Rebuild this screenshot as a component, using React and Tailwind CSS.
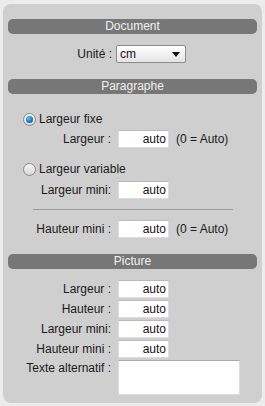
import React from "react";

const font = { fontFamily: '"Liberation Sans", Arial, sans-serif' };

function Header({ children }) {
  return (
    <div className="mx-[5px] h-[15px] rounded-[5px] bg-[#777777] text-[#f0f0f0] text-[12px] leading-[15px] text-center">
      {children}
    </div>
  );
}

function Input() {
  return (
    <div className="w-[51px] h-[18px] bg-white border border-[#dcdcdc] border-t-[#b8b8b8] text-right pr-[2px] text-[12px] leading-[16px] text-[#1a1010]">
      auto
    </div>
  );
}

function Row({ label, note }) {
  return (
    <div className="flex items-center h-[18px]">
      <div className="w-[109px] text-right pr-[1px] text-[12px] text-[#1a1a1a] shrink-0">{label}</div>
      <div className="ml-[6px]">
        <Input />
      </div>
      {note && <div className="ml-[7px] text-[12px] text-[#1a1a1a]">{note}</div>}
    </div>
  );
}

function Radio({ checked }) {
  return (
    <div className="w-[13px] h-[13px] rounded-full border border-[#8a8a8a] bg-gradient-to-b from-[#f4f4f4] to-[#d8d8d8] flex items-center justify-center">
      {checked && (
        <div className="w-[7px] h-[7px] rounded-full bg-[radial-gradient(circle_at_40%_35%,#6ec3f0,#1a6fb0_60%,#0d4a80)]" />
      )}
    </div>
  );
}

export default function App() {
  return (
    <div className="w-[265px] h-[406px] bg-[#ececec] pt-[4px] pl-[3px]" style={font}>
      <div className="w-[259px] h-[399px] bg-[#cfcfcf] rounded-[8px] pt-[15px] flex flex-col">
        <Header>Document</Header>

        <div className="mt-[11px] flex items-center h-[18px]">
          <div className="w-[109px] text-right text-[12px] text-[#1a1a1a]">Unité :</div>
          <div className="ml-[4px] w-[70px] h-[18px] border border-[#8a8a8a] rounded-[2px] bg-gradient-to-b from-white to-[#e4e4e4] flex items-center justify-between pl-[3px] pr-[5px]">
            <span className="text-[12px] text-[#1a0a20] leading-[16px]">cm</span>
            <svg width="8" height="5" viewBox="0 0 8 5">
              <path d="M0 0 L8 0 L4 5 Z" fill="#111" />
            </svg>
          </div>
        </div>

        <div className="mt-[16px]">
          <Header>Paragraphe</Header>
        </div>

        <div className="mt-[18px] flex items-center h-[14px] pl-[20px]">
          <Radio checked />
          <span className="ml-[3px] text-[12px] text-[#1a1a1a]">Largeur fixe</span>
        </div>

        <div className="mt-[4px]">
          <Row label="Largeur :" note="(0 = Auto)" />
        </div>

        <div className="mt-[14px] flex items-center h-[14px] pl-[20px]">
          <Radio />
          <span className="ml-[3px] text-[12px] text-[#1a1a1a]">Largeur variable</span>
        </div>

        <div className="mt-[5px]">
          <Row label="Largeur mini:" />
        </div>

        <div className="mt-[10px] ml-[30px] w-[200px] h-px bg-[#9a9a9a]" />

        <div className="mt-[10px]">
          <Row label="Hauteur mini :" note="(0 = Auto)" />
        </div>

        <div className="mt-[16px]">
          <Header>Picture</Header>
        </div>

        <div className="mt-[11px] flex flex-col gap-[2px]">
          <Row label="Largeur :" />
          <Row label="Hauteur :" />
          <Row label="Largeur mini:" />
          <Row label="Hauteur mini :" />
        </div>

        <div className="mt-[2px] flex items-start">
          <div className="w-[109px] text-right pr-[1px] text-[12px] text-[#1a1a1a] leading-[16px]">Texte alternatif :</div>
          <div className="ml-[6px] w-[122px] h-[35px] bg-white border border-[#dcdcdc] border-t-[#a8a8a8]" />
        </div>
      </div>
    </div>
  );
}
